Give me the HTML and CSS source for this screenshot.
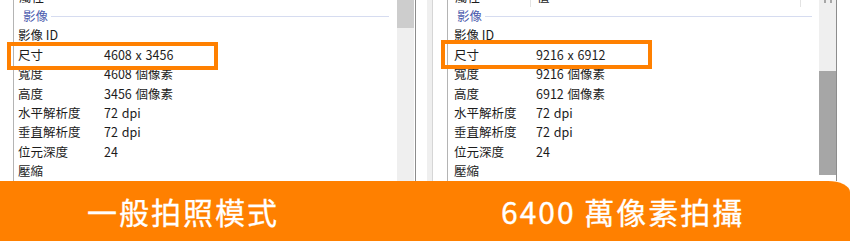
FILE: index.html
```html
<!DOCTYPE html>
<html lang="zh-Hant">
<head>
<meta charset="utf-8">
<title>一般拍照模式 vs 6400 萬像素拍攝</title>
<link rel="stylesheet" href="styles.css">
</head>
<body>
<div class="stage">
  <div class="shots">
    <div class="edge"></div>
    <div class="win win-a">
      <div class="list">
        <div class="hdr"><span class="k">屬性</span><span class="v"></span></div>
        <div class="sec"><span>影像</span><i></i></div>
        <div class="row"><span class="k">影像 ID</span><span class="v"></span></div>
        <div class="row"><span class="k">尺寸</span><span class="v">4608 x 3456</span></div>
        <div class="row"><span class="k">寬度</span><span class="v">4608 個像素</span></div>
        <div class="row"><span class="k">高度</span><span class="v">3456 個像素</span></div>
        <div class="row"><span class="k">水平解析度</span><span class="v">72 dpi</span></div>
        <div class="row"><span class="k">垂直解析度</span><span class="v">72 dpi</span></div>
        <div class="row"><span class="k">位元深度</span><span class="v">24</span></div>
        <div class="row"><span class="k">壓縮</span><span class="v"></span></div>
      </div>
      <div class="sb"><div class="thumb"></div></div>
    </div>
    <div class="between"><div class="strip"></div></div>
    <div class="win win-b">
      <div class="list">
        <div class="hdr"><span class="k">屬性</span><span class="v">值</span><span class="rest"></span></div>
        <div class="sec"><span>影像</span><i></i></div>
        <div class="row"><span class="k">影像 ID</span><span class="v"></span></div>
        <div class="row"><span class="k">尺寸</span><span class="v">9216 x 6912</span></div>
        <div class="row"><span class="k">寬度</span><span class="v">9216 個像素</span></div>
        <div class="row"><span class="k">高度</span><span class="v">6912 個像素</span></div>
        <div class="row"><span class="k">水平解析度</span><span class="v">72 dpi</span></div>
        <div class="row"><span class="k">垂直解析度</span><span class="v">72 dpi</span></div>
        <div class="row"><span class="k">位元深度</span><span class="v">24</span></div>
        <div class="row"><span class="k">壓縮</span><span class="v"></span></div>
      </div>
      <div class="sb">
        <svg class="arrow" width="8" height="3" viewBox="0 0 8 3"><path d="M1 0v3M7 0v3" stroke="#777" stroke-width="1.2"/></svg>
        <div class="thumb"></div>
      </div>
    </div>
    <div class="edge"></div>
  </div>
  <div class="banner">
    <div class="cap cap-a">一般拍照模式</div>
    <div class="cap cap-b">6400 萬像素拍攝</div>
  </div>
  <div class="hl hl-a"></div>
  <div class="hl hl-b"></div>
</div>
</body>
</html>
```

FILE: styles.css
```css
* { box-sizing: border-box; }
html, body { margin: 0; padding: 0; background: #fff; }
body {
  font-family: "Noto Sans CJK TC", "Noto Sans", sans-serif;
  color: #1c1c1c;
}
.stage {
  position: relative;
  width: 850px;
  height: 241px;
  overflow: hidden;
  background: #fff;
}
.shots {
  display: flex;
  height: 181px;
}
.edge { width: 13px; flex: none; }
.win {
  display: flex;
  height: 100%;
  flex: none;
  border-left: 1px solid #b4b4b4;
  border-right: 1px solid #8c8c8c;
}
.win-a { width: 403px; }
.win-b { width: 390px; }
.list {
  flex: 1;
  overflow: hidden;
  font-size: 12.5px;
  line-height: 1;
}
.win-a .list { padding-left: 4px; --kw: 86px; --sl: 5px; --sr: 8px; }
.win-b .list { padding-left: 6px; --kw: 82px; --sl: 3px; --sr: 7px; }

.hdr {
  display: flex;
  height: 20px;
  margin-top: -13px;
  align-items: center;
}
.hdr .k { width: var(--kw); padding-left: 1px; }
.win-b .hdr .k { width: 77px; border-right: 1px solid #e3e3e3; height: 100%; display: flex; align-items: center; }
.win-b .hdr .v { width: 270px; padding-left: 6px; border-right: 1px solid #e3e3e3; height: 100%; display: flex; align-items: center; }

.sec {
  display: flex;
  align-items: center;
  height: 19px;
  padding-left: var(--sl);
  padding-right: var(--sr);
  color: #4d5cae;
}
.sec i {
  flex: 1;
  height: 1px;
  margin-left: 3px;
  background: #d6dcf0;
}
.row {
  display: flex;
  align-items: center;
  height: 19.4px;
  white-space: nowrap;
}
.row .k { width: var(--kw); flex: none; }
.row .v { flex: 1; word-spacing: 1px; }

.sb {
  position: relative;
  width: 17px;
  flex: none;
  background: #efefef;
}
.win-a .sb { margin-right: 1px; }
.win-a .thumb {
  height: 28px;
  background: #cdcdcd;
}
.win-b .thumb {
  position: absolute;
  left: 0;
  right: 0;
  top: 71px;
  bottom: 6px;
  background: #a6a6a6;
}
.win-b .sb::after {
  content: "";
  position: absolute;
  left: 0; right: 0; bottom: 0;
  height: 6px;
  background: #fff;
}
.arrow {
  position: absolute;
  left: 5px;
  top: 0;
}

.between {
  width: 31px;
  flex: none;
  display: flex;
  padding-left: 11px;
}
.strip {
  width: 6px;
  height: 100%;
  background: #efefef;
  border-right: 1px solid #d6d6d6;
}

.banner {
  display: flex;
  height: 60px;
  background: #ff8000;
  border-top-right-radius: 22px 11px;
  color: #fff;
  font-size: 30px;
  font-weight: 400;
  -webkit-text-stroke: 0.3px #fff;
  letter-spacing: 2px;
  align-items: center;
}
.cap { width: 425px; flex: none; white-space: nowrap; }
.cap-a { padding-left: 87px; }
.cap-b { padding-left: 76px; }

.hl {
  position: absolute;
  border: 4px solid #ff8000;
}
.hl-a { left: 7px; top: 42px; width: 211px; height: 28px; }
.hl-b { left: 441px; top: 40px; width: 211px; height: 29px; }
```
